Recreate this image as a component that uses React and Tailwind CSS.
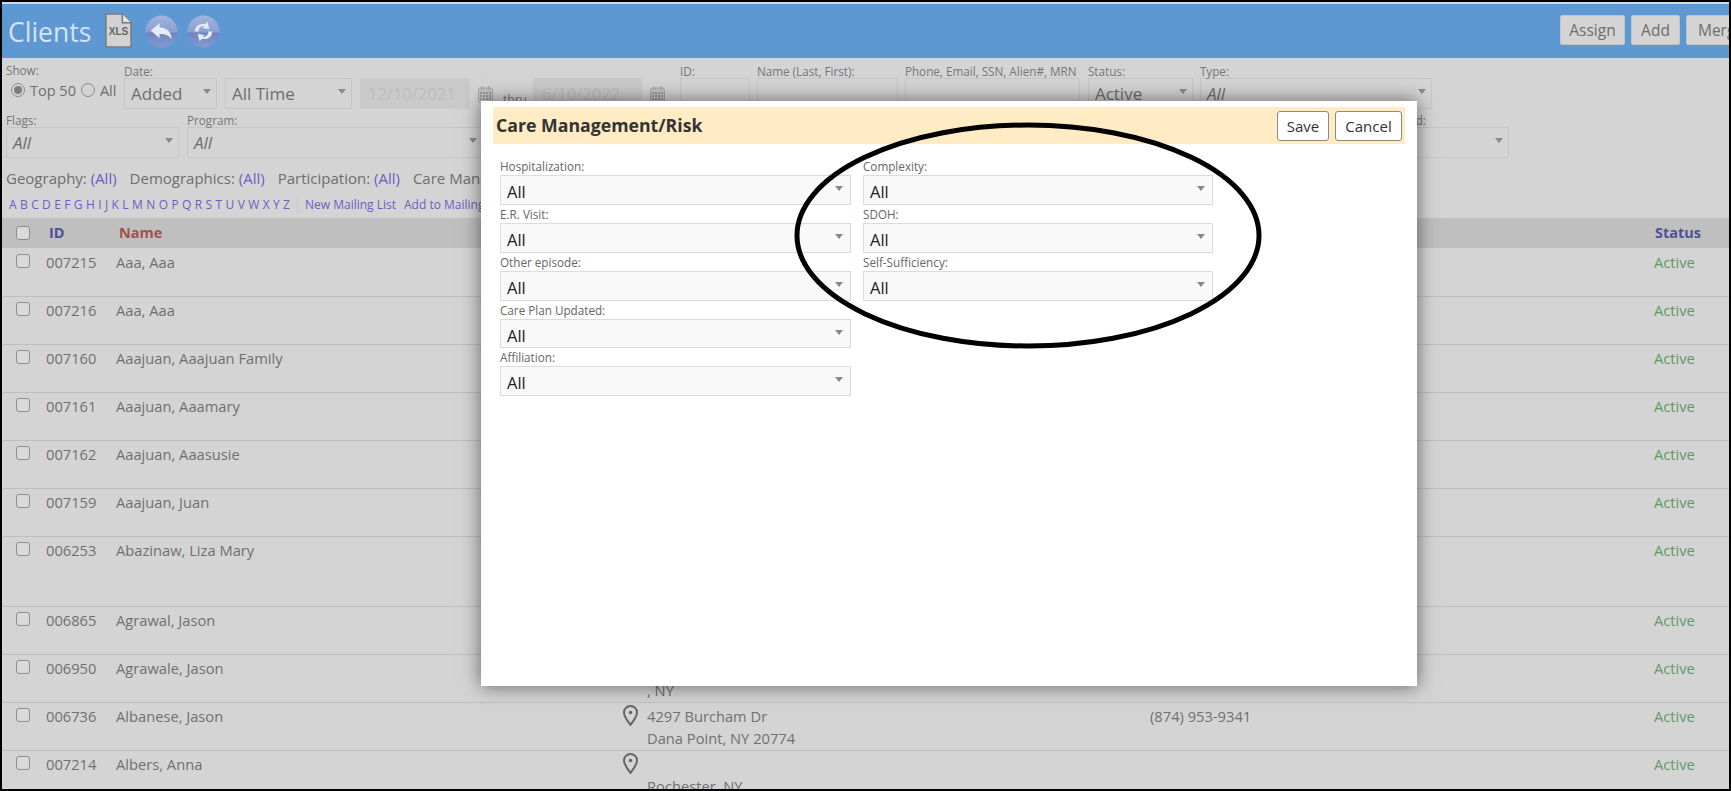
import React from 'react';

function Caret({ className = '' }) {
  return <span className={`block w-0 h-0 border-x-[4px] border-t-[5px] border-x-transparent border-t-[#8a8a8a] shrink-0 ${className}`} />;
}

function FilterSelect({ value, italic, className = '' }) {
  return (
    <div className={`h-[31px] border border-[#c6c6c6] flex justify-between items-start pl-[6px] pr-[5px] ${className}`}>
      <span className={`text-[17px] leading-[30px] text-[#6e6e6e] ${italic ? 'italic' : ''}`}>{value}</span>
      <Caret className="mt-[10px]" />
    </div>
  );
}

function Calendar({ className = '' }) {
  return (
    <svg width="15" height="17" viewBox="0 0 15 17" className={className}>
      <rect x="0.5" y="2" width="14" height="14.5" rx="2" fill="#c4c4c4" stroke="#a8a8a8" />
      <rect x="3" y="0.5" width="2" height="3" fill="#a8a8a8" />
      <rect x="10" y="0.5" width="2" height="3" fill="#a8a8a8" />
      {[6, 9, 12].map((y) =>
        [3, 6, 9, 12].map((x) => <rect key={`${x}-${y}`} x={x - 1} y={y} width="2" height="2" fill="#9a9a9a" />)
      )}
    </svg>
  );
}

function Label({ children, className = '' }) {
  return <div className={`h-[14px] text-[11.7px] leading-[14px] text-[#777] whitespace-nowrap ${className}`}>{children}</div>;
}

function Radio({ checked }) {
  return (
    <span className="w-[14px] h-[14px] rounded-full border border-[#8a8a8a] flex items-center justify-center shrink-0">
      {checked && <span className="w-[8px] h-[8px] rounded-full bg-[#7d7d7d]" />}
    </span>
  );
}

function GlossIcon({ id, children }) {
  return (
    <svg width="33" height="33" viewBox="0 0 34 34">
      <defs>
        <linearGradient id={id} x1="0" y1="0" x2="0" y2="1">
          <stop offset="0" stopColor="#a2b4de" />
          <stop offset="0.5" stopColor="#8b9fd2" />
          <stop offset="0.55" stopColor="#7085c0" />
          <stop offset="1" stopColor="#8599d2" />
        </linearGradient>
      </defs>
      <circle cx="17" cy="17" r="16.5" fill={`url(#${id})`} />
      {children}
    </svg>
  );
}

function XlsIcon() {
  return (
    <svg width="27" height="35" viewBox="0 0 28 36">
      <path d="M1 1H18L27 10V35H1Z" fill="#d2d2d2" stroke="#777" strokeWidth="1.5" />
      <path d="M18 1V10H27" fill="#e6e6e6" stroke="#777" strokeWidth="1.5" />
      <text x="14" y="23" textAnchor="middle" fontSize="10.5" fontWeight="700" fill="#666" fontFamily="'Liberation Sans', sans-serif">XLS</text>
    </svg>
  );
}

function Pin() {
  return (
    <svg width="15" height="21" viewBox="0 0 15 21" className="text-[#666]">
      <path d="M7.5 1C3.8 1 1 3.9 1 7.4C1 11.6 5 16.6 7.5 19.8C10 16.6 14 11.6 14 7.4C14 3.9 11.2 1 7.5 1Z" fill="none" stroke="currentColor" strokeWidth="2" />
      <circle cx="7.5" cy="7.5" r="1.8" fill="currentColor" />
    </svg>
  );
}

const rows = [
  { id: '007215', name: 'Aaa, Aaa' },
  { id: '007216', name: 'Aaa, Aaa' },
  { id: '007160', name: 'Aaajuan, Aaajuan Family' },
  { id: '007161', name: 'Aaajuan, Aaamary' },
  { id: '007162', name: 'Aaajuan, Aaasusie' },
  { id: '007159', name: 'Aaajuan, Juan' },
  { id: '006253', name: 'Abazinaw, Liza Mary', tall: true },
  { id: '006865', name: 'Agrawal, Jason' },
  { id: '006950', name: 'Agrawale, Jason', addr: ['', ', NY'] },
  { id: '006736', name: 'Albanese, Jason', pin: true, addr: ['4297 Burcham Dr', 'Dana Point, NY 20774'], phone: '(874) 953-9341' },
  { id: '007214', name: 'Albers, Anna', pin: true, addr: ['', 'Rochester, NY'] },
];

function Checkbox() {
  return <span className="block w-[14px] h-[14px] rounded-[3px] border border-[#8c8c8c] bg-[#dadada] shrink-0" />;
}

function Row({ row }) {
  return (
    <div className={`flex items-start border-b border-[#bebebe] shrink-0 text-[14.7px] leading-[22px] text-[#707070] ${row.tall ? 'h-[70px]' : 'h-[48px]'}`}>
      <div className="w-[44px] pl-[14px] pt-[5px]"><Checkbox /></div>
      <div className="w-[70px] pt-[2px]">{row.id}</div>
      <div className="w-[507px] pt-[2px]">{row.name}</div>
      <div className="w-[24px] pt-[2px]">
        {row.pin && <Pin />}
      </div>
      <div className="w-[503px] pt-[2px] whitespace-nowrap">
        {row.addr && row.addr.map((line, i) => <div key={i} className="h-[22px]">{line}</div>)}
      </div>
      <div className="w-[504px] pt-[2px]">{row.phone}</div>
      <div className="pt-[2px] text-[#5f9a68]">Active</div>
    </div>
  );
}

function ModalSelect({ label, tight }) {
  return (
    <div>
      <div className="h-[18px] text-[11.7px] leading-[18px] text-[#666]">{label}</div>
      <div className={`border border-[#dcdcdc] bg-[#f9f9f9] flex justify-between items-start pl-[6px] pr-[7px] ${tight ? 'h-[29px]' : 'h-[30px]'}`}>
        <span className="text-[16.5px] leading-[31px] text-[#222]">All</span>
        <Caret className="mt-[10px]" />
      </div>
    </div>
  );
}

export default function App() {
  return (
    <div className="relative h-screen w-full overflow-hidden border-2 border-black bg-[#d4d4d4] flex flex-col font-['Open_Sans',sans-serif]">
      {/* Encabezado */}
      <div className="h-[56px] shrink-0 bg-[#5e98d3] border-t-2 border-[#d9d9d9] flex items-start">
        <h1 className="ml-[6px] mt-[11px] text-[26.5px] leading-[34px] text-[#d5e3f3]">Clients</h1>
        <div className="ml-[14px] mt-[9px]"><XlsIcon /></div>
        <div className="ml-[13px] mt-[11px]">
          <GlossIcon id="gBack">
            <path d="M6 16L15 8.5V13C22 13 27 17 27.5 25C24.5 20.5 20.5 19.5 15 19.5V24Z" fill="#e6ecf6" />
          </GlossIcon>
        </div>
        <div className="ml-[9px] mt-[11px]">
          <GlossIcon id="gRefresh">
            <path d="M8 17C8 11.5 13 8 18.5 9.5L21 7L23 14.5L15.5 13.5L18 11.5C14.5 11 12 13.5 12 17Z" fill="#e6ecf6" />
            <path d="M26 17C26 22.5 21 26 15.5 24.5L13 27L11 19.5L18.5 20.5L16 22.5C19.5 23 22 20.5 22 17Z" fill="#e6ecf6" />
          </GlossIcon>
        </div>
        <div className="ml-auto mt-[11px] flex gap-[6px] -mr-[27px]">
          <div className="w-[65px] h-[30px] text-center rounded-[2px] bg-[#d4d4d4] border border-[#c4c4c4] text-[15.5px] leading-[28px] text-[#6e6e6e]">Assign</div>
          <div className="w-[49px] h-[30px] text-center rounded-[2px] bg-[#d4d4d4] border border-[#c4c4c4] text-[15.5px] leading-[28px] text-[#6e6e6e]">Add</div>
          <div className="w-[70px] h-[30px] text-center rounded-[2px] bg-[#d4d4d4] border border-[#c4c4c4] text-[15.5px] leading-[28px] text-[#6e6e6e]">Merge</div>
        </div>
      </div>

      {/* Filtros */}
      <div className="h-[160px] shrink-0 pl-[4px] whitespace-nowrap">
        <div className="flex items-start pt-[6px] h-[50px]">
          <div className="w-[118px]">
            <Label className="-mt-[1px]">Show:</Label>
            <div className="flex items-center mt-[3px] text-[14.5px] leading-[22px] text-[#6e6e6e]">
              <span className="ml-[5px] -mt-[3px]"><Radio checked /></span>
              <span className="ml-[5px]">Top 50</span>
              <span className="ml-[5px] -mt-[3px]"><Radio /></span>
              <span className="ml-[5px]">All</span>
            </div>
          </div>
          <div className="w-[93px]">
            <Label>Date:</Label>
            <FilterSelect value="Added" className="w-[93px]" />
          </div>
          <div className="ml-[8px] pt-[14px]"><FilterSelect value="All Time" className="w-[127px]" /></div>
          <div className="ml-[8px] mt-[14px] w-[110px] h-[31px] bg-[#cacaca] pl-[8px] text-[16.5px] leading-[31px] text-[#bdbdbd]">12/10/2021</div>
          <Calendar className="ml-[8px] mt-[22px]" />
          <span className="ml-[10px] mt-[27px] text-[12px] text-[#777]">thru</span>
          <div className="ml-[6px] mt-[14px] w-[109px] h-[31px] bg-[#cacaca] pl-[9px] text-[16.5px] leading-[31px] text-[#bdbdbd]">6/10/2022</div>
          <Calendar className="ml-[8px] mt-[22px]" />
          <div className="ml-[15px] w-[70px]">
            <Label>ID:</Label>
            <div className="h-[31px] border border-[#c6c6c6]" />
          </div>
          <div className="ml-[7px] w-[141px]">
            <Label>Name (Last, First):</Label>
            <div className="h-[31px] border border-[#c6c6c6]" />
          </div>
          <div className="ml-[7px] w-[175px]">
            <Label>Phone, Email, SSN, Alien#, MRN</Label>
            <div className="h-[31px] border border-[#c6c6c6]" />
          </div>
          <div className="ml-[8px] w-[105px]">
            <Label>Status:</Label>
            <FilterSelect value="Active" />
          </div>
          <div className="ml-[7px] w-[232px]">
            <Label>Type:</Label>
            <FilterSelect value="All" italic />
          </div>
        </div>

        <div className="flex items-start h-[57px] pt-[5px]">
          <div className="w-[173px]">
            <Label>Flags:</Label>
            <FilterSelect value="All" italic />
          </div>
          <div className="ml-[8px] w-[296px]">
            <Label>Program:</Label>
            <FilterSelect value="All" italic />
          </div>
          <div className="ml-[867px] w-[159px]">
            <Label className="pl-[2px]">Custom Field:</Label>
            <FilterSelect value="All" italic />
          </div>
        </div>

        <div className="flex h-[26px] text-[15px] leading-[26px] text-[#6e6e6e]">
          <span>Geography: <span className="text-[#6a5fc4]">(All)</span></span>
          <span className="ml-[13px]">Demographics: <span className="text-[#6a5fc4]">(All)</span></span>
          <span className="ml-[13px]">Participation: <span className="text-[#6a5fc4]">(All)</span></span>
          <span className="ml-[13px]">Care Management: <span className="text-[#6a5fc4]">(All)</span></span>
        </div>

        <div className="flex items-center h-[18px] mt-[5px] text-[12px] text-[#6a5fc4]">
          <span className="ml-[3px] flex gap-[3.4px]">
            {'ABCDEFGHIJKLMNOPQRSTUVWXYZ'.split('').map((c) => <span key={c}>{c}</span>)}
          </span>
          <span className="ml-[7px] h-[18px] border-l border-[#c6c6c6]" />
          <span className="ml-[7px]">New Mailing List</span>
          <span className="ml-[8px]">Add to Mailing List</span>
        </div>
      </div>

      {/* Tabla */}
      <div className="h-[30px] shrink-0 bg-[#bfbfbf] flex items-center text-[14.5px] font-bold">
        <div className="w-[47px] pl-[14px]"><Checkbox /></div>
        <div className="w-[70px] text-[#50509a]">ID</div>
        <div className="w-[1536px] text-[#a54f4f]">Name</div>
        <div className="text-[#50509a]">Status</div>
      </div>
      <div className="flex-1 flex flex-col min-h-0 overflow-hidden pt-[1px]">
        {rows.map((row) => <Row key={row.id} row={row} />)}
      </div>

      {/* Modal */}
      <div className="absolute left-[479px] top-[99px] w-[936px] h-[585px] bg-white px-[12px] pt-[6px] shadow-[0_0_18px_rgba(0,0,0,0.55)]">
        <div className="h-[37px] bg-[#ffebc4] flex items-start justify-between pl-[3px] pr-[3px]">
          <h2 className="text-[17.7px] leading-[36px] font-bold text-[#333]">Care Management/Risk</h2>
          <div className="flex gap-[6px] mt-[4px]">
            <div className="w-[52px] h-[30px] bg-white border border-[#8a8a8a] rounded-[3px] text-center text-[15px] leading-[28px] text-[#333]">Save</div>
            <div className="w-[67px] h-[30px] bg-white border border-[#8a8a8a] rounded-[3px] text-center text-[15px] leading-[28px] text-[#333]">Cancel</div>
          </div>
        </div>
        <div className="flex items-start gap-[12px] pl-[7px] pt-[13px]">
          <div className="w-[351px]">
            <ModalSelect label="Hospitalization:" />
            <ModalSelect label="E.R. Visit:" />
            <ModalSelect label="Other episode:" />
            <ModalSelect label="Care Plan Updated:" tight />
            <ModalSelect label="Affiliation:" />
          </div>
          <div className="w-[350px]">
            <ModalSelect label="Complexity:" />
            <ModalSelect label="SDOH:" />
            <ModalSelect label="Self-Sufficiency:" />
          </div>
        </div>
        {/* Circulo dibujado encima */}
        <svg className="absolute left-[313px] top-[21px] pointer-events-none" width="468" height="228" viewBox="0 0 468 228">
          <ellipse cx="234" cy="113.5" rx="231" ry="110.5" fill="none" stroke="#000" strokeWidth="5" />
        </svg>
      </div>
    </div>
  );
}
